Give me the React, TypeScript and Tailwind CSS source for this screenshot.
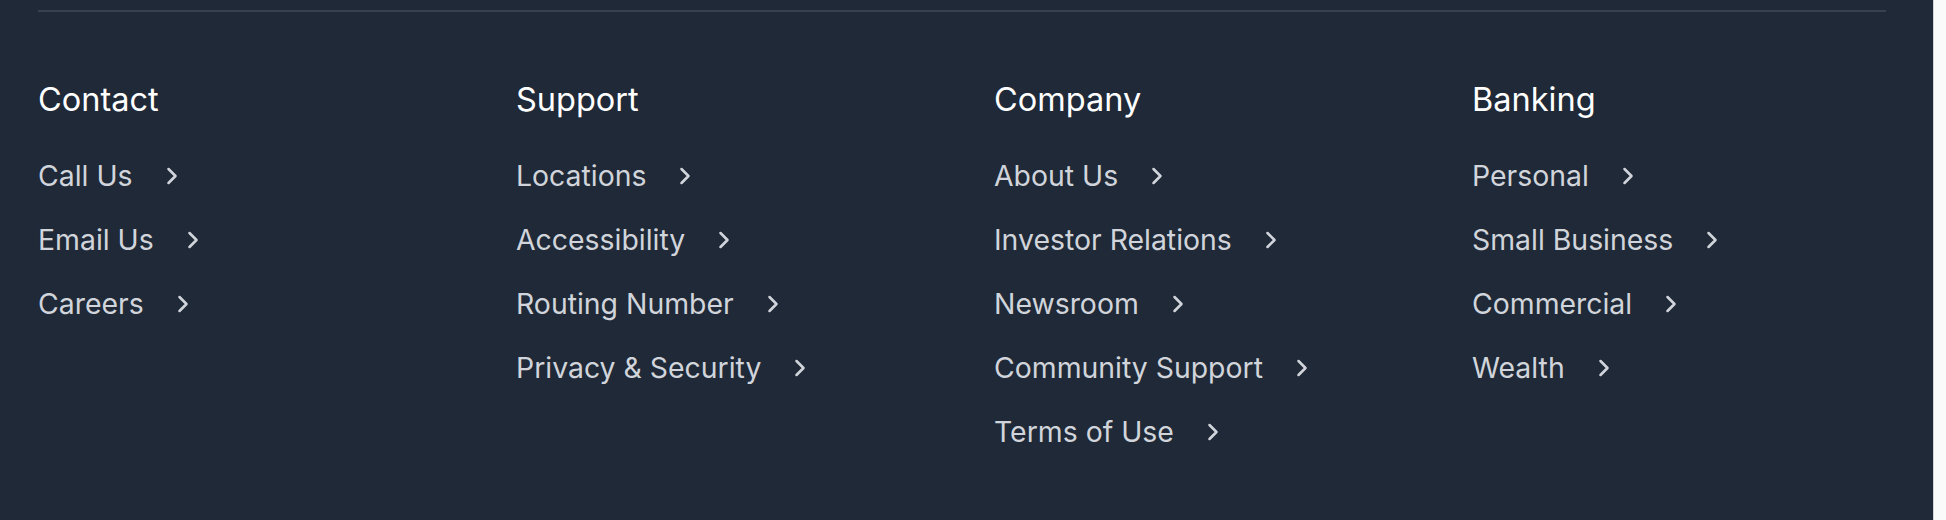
import { ChevronRight } from 'lucide-react';

const columns = [
  { title: 'Contact', links: ['Call Us', 'Email Us', 'Careers'] },
  { title: 'Support', links: ['Locations', 'Accessibility', 'Routing Number', 'Privacy & Security'] },
  { title: 'Company', links: ['About Us', 'Investor Relations', 'Newsroom', 'Community Support', 'Terms of Use'] },
  { title: 'Banking', links: ['Personal', 'Small Business', 'Commercial', 'Wealth'] },
];

export default function App() {
  return (
    <div className="flex h-[520px] w-full overflow-hidden font-['Inter',sans-serif]">
      <footer className="flex-1 bg-[#1f2937] pt-[10px] pl-[38px] pr-[47px]">
        <div className="border-t-2 border-[#374151]" />

        <div className="mt-[70px] grid grid-cols-4 gap-x-[64px]">
          {columns.map((col) => (
            <div key={col.title}>
              <h3 className="text-[32.5px] leading-[36px] font-normal text-white">{col.title}</h3>
              <ul className="mt-[38px] flex flex-col gap-[24px]">
                {col.links.map((link) => (
                  <li key={link}>
                    <a href="#" className="flex items-center gap-[25px] text-[28.4px] leading-[40px] text-[#d1d5db]">
                      {link}
                      <ChevronRight size={28} strokeWidth={2.2} />
                    </a>
                  </li>
                ))}
              </ul>
            </div>
          ))}
        </div>
      </footer>

      {/* scrollbar gutter */}
      <div className="w-[13px] border-l border-[#d4d4d4] bg-[#fafafa]" />
    </div>
  );
}
